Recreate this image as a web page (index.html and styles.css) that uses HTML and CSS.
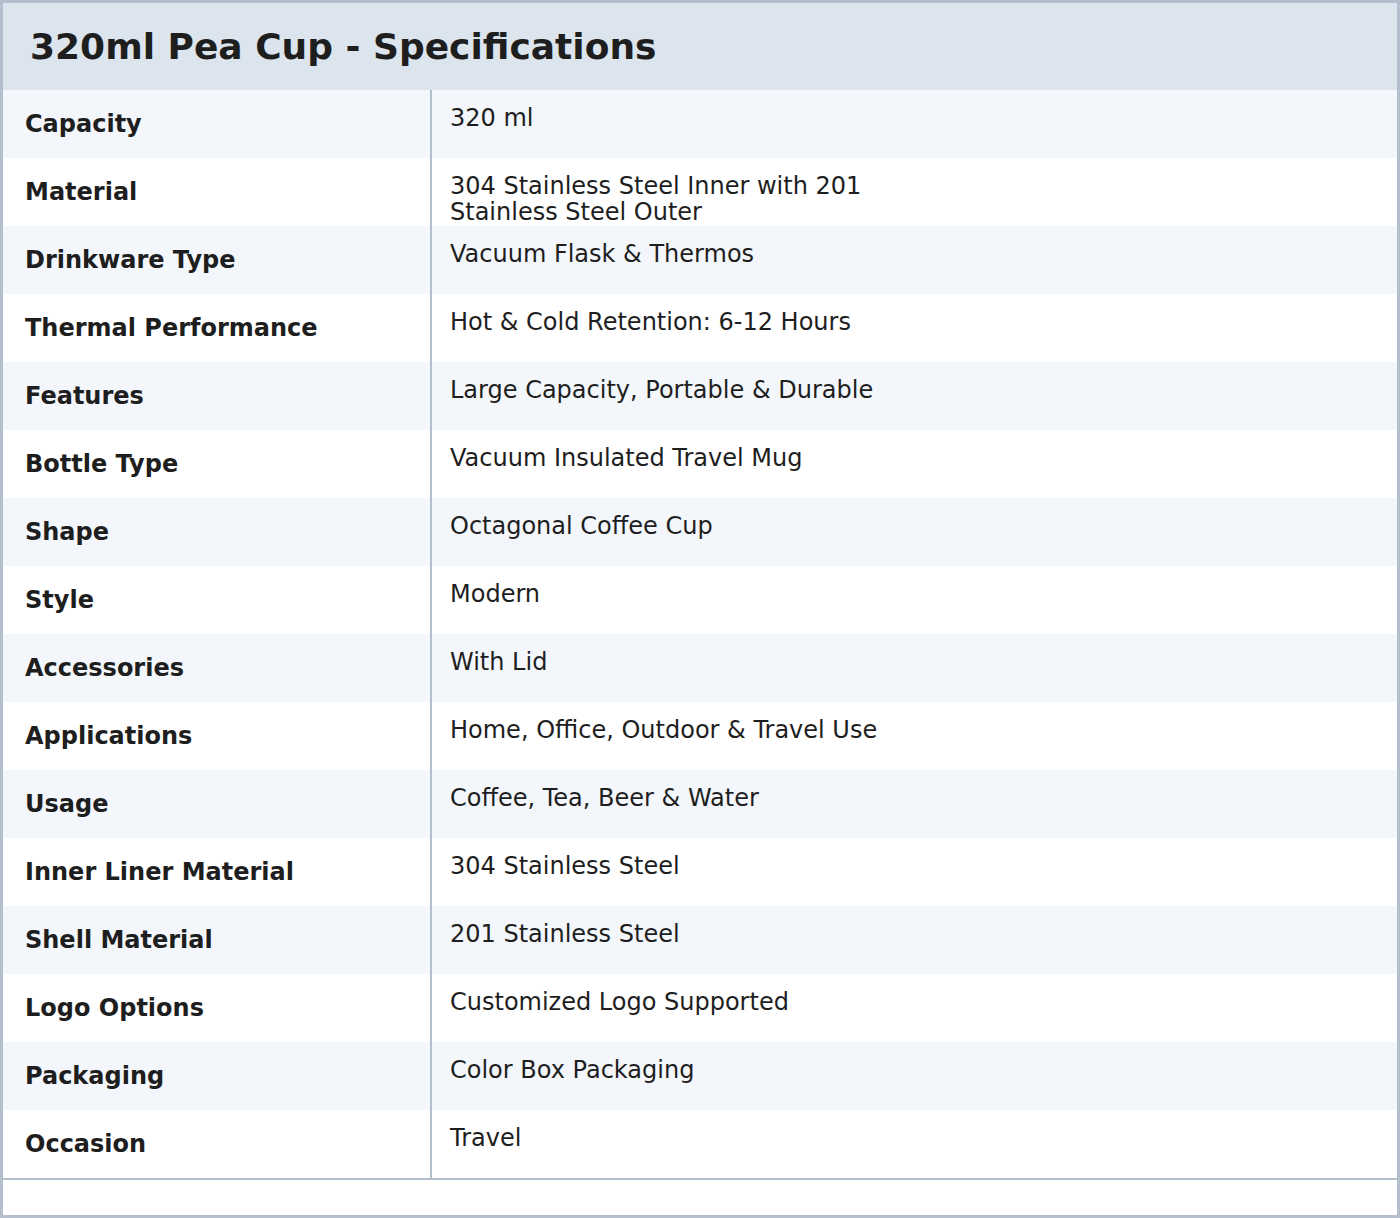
FILE: index.html
```html
<!DOCTYPE html>
<html>
<head>
<meta charset="utf-8">
<link rel="stylesheet" href="styles.css">
</head>
<body>
<div class="sheet">
  <div class="head"><h1 class="title">320ml Pea Cup - Specifications</h1></div>
  <div class="table">
    <div class="row"><div class="label">Capacity</div><div class="value">320 ml</div></div>
    <div class="row"><div class="label">Material</div><div class="value">304 Stainless Steel Inner with 201<br>Stainless Steel Outer</div></div>
    <div class="row"><div class="label">Drinkware Type</div><div class="value">Vacuum Flask &amp; Thermos</div></div>
    <div class="row"><div class="label">Thermal Performance</div><div class="value">Hot &amp; Cold Retention: 6-12 Hours</div></div>
    <div class="row"><div class="label">Features</div><div class="value">Large Capacity, Portable &amp; Durable</div></div>
    <div class="row"><div class="label">Bottle Type</div><div class="value">Vacuum Insulated Travel Mug</div></div>
    <div class="row"><div class="label">Shape</div><div class="value">Octagonal Coffee Cup</div></div>
    <div class="row"><div class="label">Style</div><div class="value">Modern</div></div>
    <div class="row"><div class="label">Accessories</div><div class="value">With Lid</div></div>
    <div class="row"><div class="label">Applications</div><div class="value">Home, Office, Outdoor &amp; Travel Use</div></div>
    <div class="row"><div class="label">Usage</div><div class="value">Coffee, Tea, Beer &amp; Water</div></div>
    <div class="row"><div class="label">Inner Liner Material</div><div class="value">304 Stainless Steel</div></div>
    <div class="row"><div class="label">Shell Material</div><div class="value">201 Stainless Steel</div></div>
    <div class="row"><div class="label">Logo Options</div><div class="value">Customized Logo Supported</div></div>
    <div class="row"><div class="label">Packaging</div><div class="value">Color Box Packaging</div></div>
    <div class="row"><div class="label">Occasion</div><div class="value">Travel</div></div>
  </div>
</div>
</body>
</html>
```
FILE: styles.css
```css
html, body { margin: 0; padding: 0; }
body {
  font-family: "DejaVu Sans", sans-serif;
  color: #1e1e1e;
  background: #ffffff;
}
.sheet {
  width: 1400px;
  height: 1218px;
  box-sizing: border-box;
  border: 3px solid #b3bfcc;
  background: #ffffff;
}
.head {
  height: 87px;
  background: #dce4ee;
  display: flex;
  align-items: center;
  padding-left: 27px;
}
.title {
  margin: 0;
  font-size: 36px;
  font-weight: bold;
  line-height: 1;
}
.table {
  border-bottom: 2px solid #b3bfcc;
}
.row {
  display: flex;
  height: 68px;
}
.row:nth-child(odd) { background: #f3f7fc; }
.label {
  width: 405px;
  flex: none;
  padding-left: 22px;
  display: flex;
  align-items: center;
  font-weight: bold;
  font-size: 24px;
  border-right: 2px solid #b3bfcc;
}
.value {
  padding: 15px 0 0 18px;
  font-size: 24px;
  line-height: 26px;
}
```
